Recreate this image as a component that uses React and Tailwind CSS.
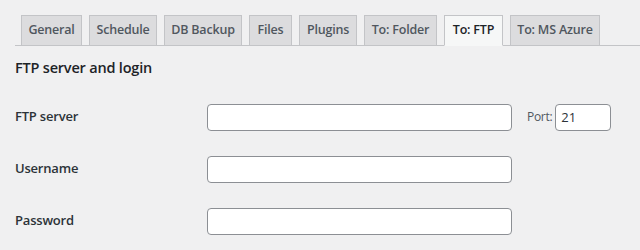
const TABS = [
	{ label: "General", w: "w-[61px]" },
	{ label: "Schedule", w: "w-[68px]" },
	{ label: "DB Backup", w: "w-[78px]" },
	{ label: "Files", w: "w-[43px]" },
	{ label: "Plugins", w: "w-[58px]" },
	{ label: "To: Folder", w: "w-[73px]" },
	{ label: "To: FTP", w: "w-[59px]", active: true },
	{ label: "To: MS Azure", w: "w-[90px]" },
];

function Field({ label, port }) {
	return (
		<div className="flex items-center h-[52px]">
			<label className="w-[192px] text-[13px] font-semibold text-[#2c3338] tracking-[-0.2px]">
				{label}
			</label>
			<input
				type="text"
				className="w-[305px] h-[27px] bg-white border border-[#8c8f94] rounded-[4px] outline-none"
			/>
			{port && (
				<div className="flex items-center ml-[15px]">
					<span className="text-[12px] text-[#50575e] tracking-[-0.3px]">Port:</span>
					<input
						type="text"
						defaultValue="21"
						className="ml-[3px] w-[56px] h-[27px] px-[5px] text-[13px] text-[#2c3338] bg-white border border-[#8c8f94] rounded-[4px] outline-none"
					/>
				</div>
			)}
		</div>
	);
}

export default function App() {
	return (
		<div
			className="w-[640px] h-[250px] bg-[#f0f0f1] overflow-hidden pt-[15px]"
			style={{ fontFamily: '"Open Sans", "Liberation Sans", sans-serif' }}>
			{/* tab strip */}
			<div className="ml-[15px] flex items-end gap-[7px] pl-[6px] border-b border-[#c3c4c7] h-[31px]">
				{TABS.map(({ label, w, active }) => (
					<div
						key={label}
						className={`${w} h-[31px] -mb-px flex items-center justify-center border border-[#c3c4c7] text-[12.5px] font-semibold tracking-[-0.2px] ${
							active
								? "bg-[#f6f7f7] border-b-[#f6f7f7] text-[#1d2327]"
								: "bg-[#dcdcde] text-[#50575e]"
						}`}>
						{label}
					</div>
				))}
			</div>

			<div className="px-[15px]">
				<h2 className="mt-[12px] text-[14.5px] font-semibold text-[#1d2327] tracking-[-0.2px] leading-[20px]">
					FTP server and login
				</h2>
				<div className="mt-[13px]">
					<Field label="FTP server" port />
					<Field label="Username" />
					<Field label="Password" />
				</div>
			</div>
		</div>
	);
}
